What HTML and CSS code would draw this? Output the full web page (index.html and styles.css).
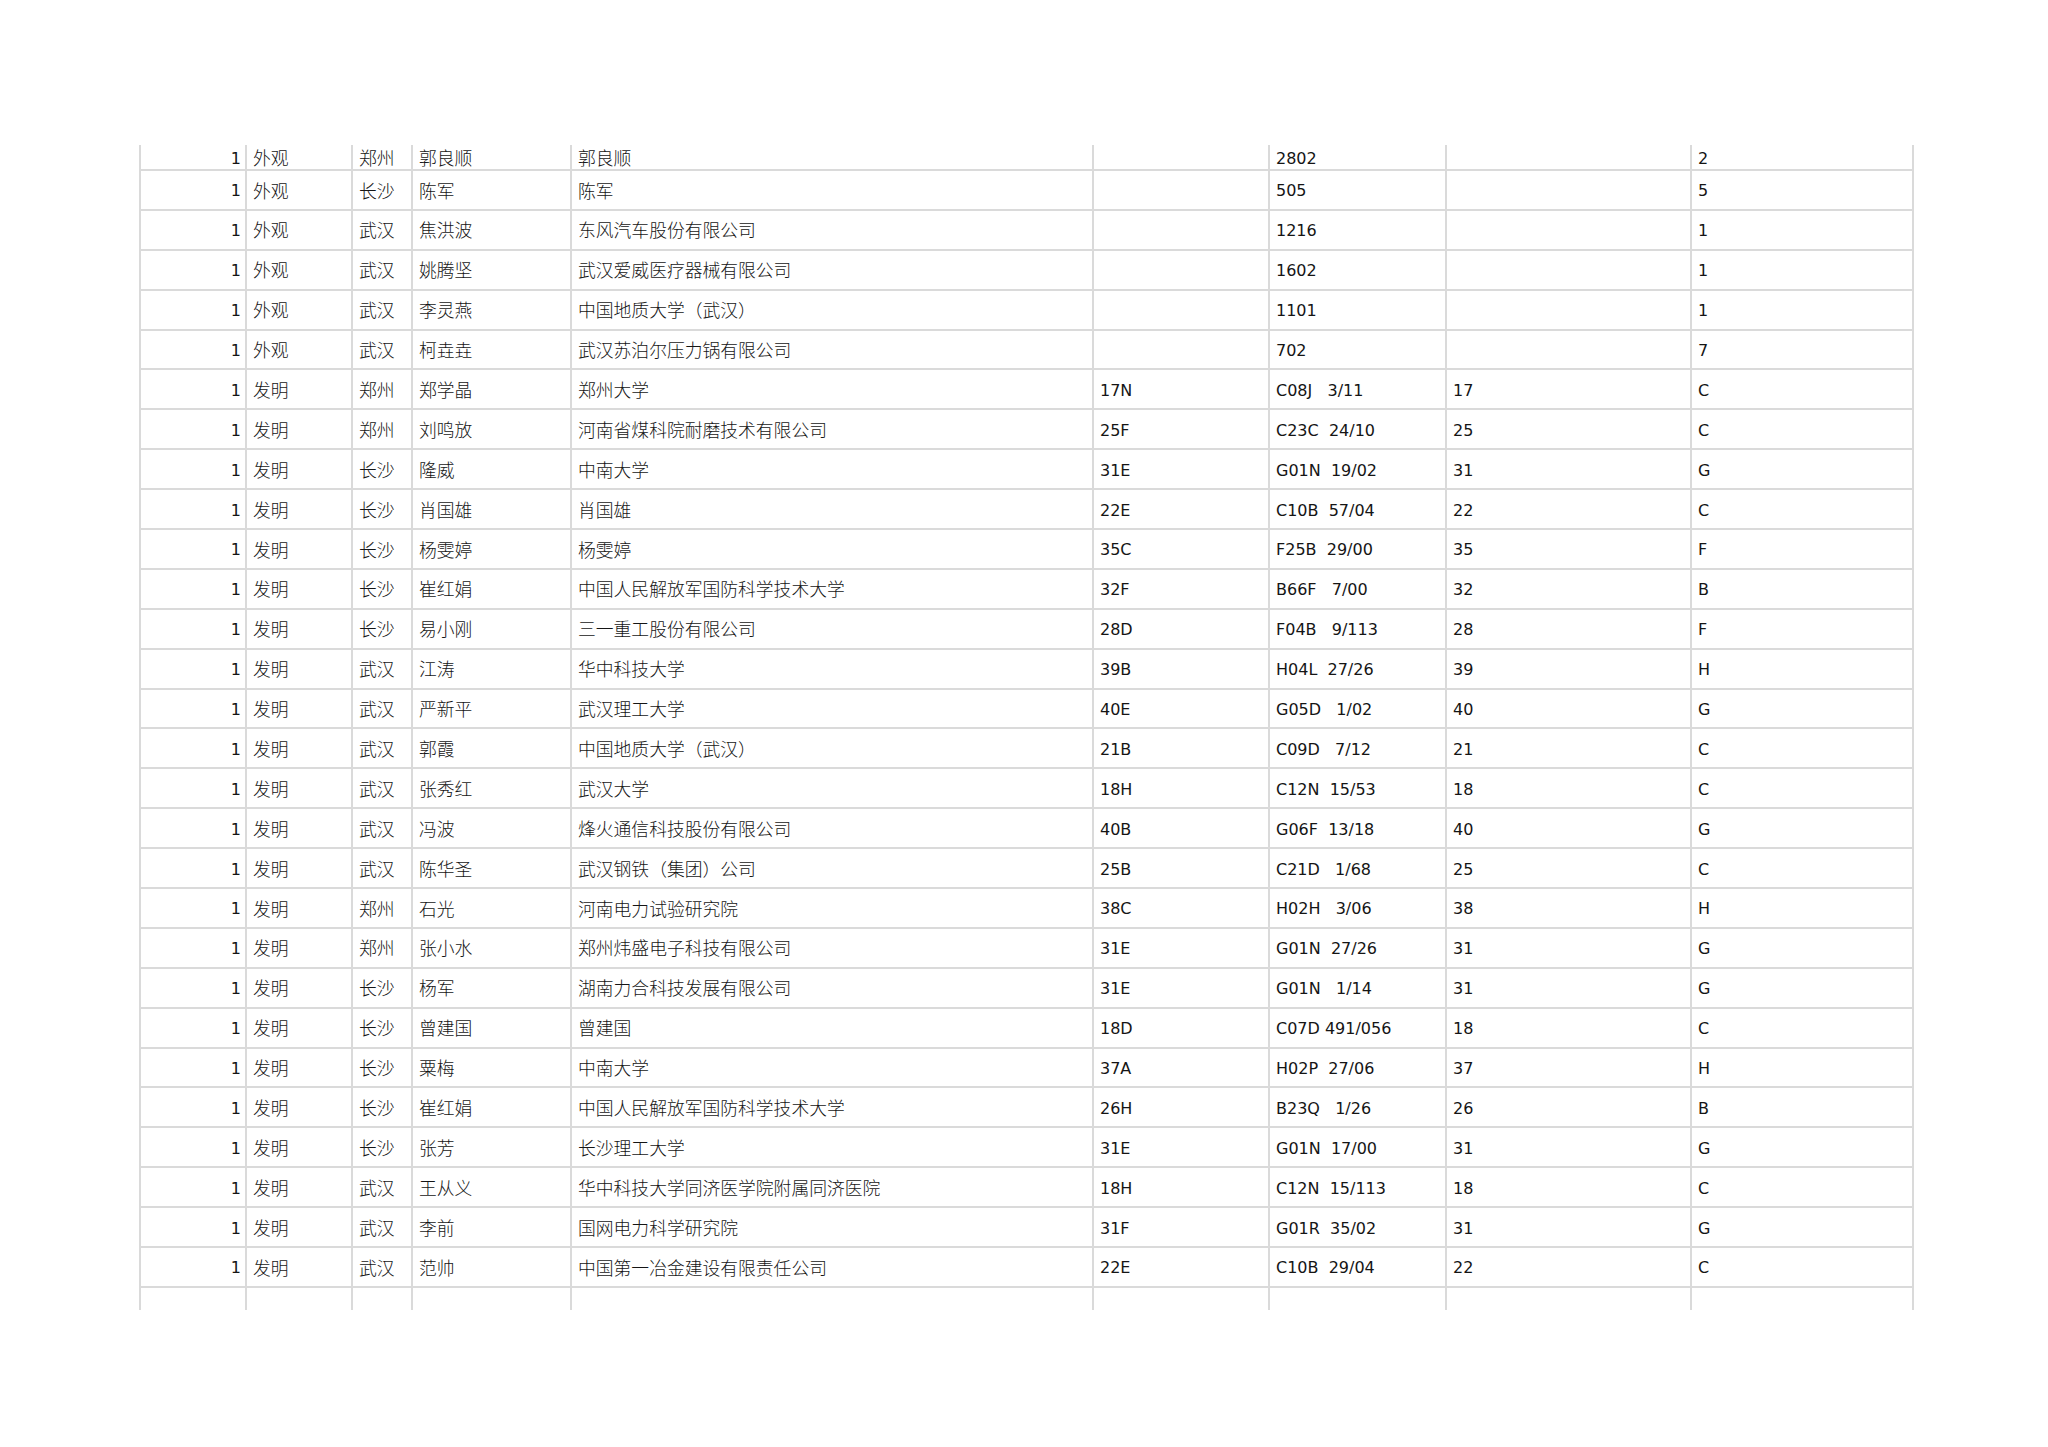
FILE: index.html
```html
<!DOCTYPE html>
<html lang="zh-CN">
<head>
<meta charset="utf-8">
<title>专利列表</title>
<link rel="stylesheet" href="styles.css">
</head>
<body>
<div class="sheet">
  <div class="row first"><div class="c n">1</div><div class="c">外观</div><div class="c">郑州</div><div class="c">郭良顺</div><div class="c">郭良顺</div><div class="c"></div><div class="c">2802</div><div class="c"></div><div class="c">2</div></div>
  <div class="row"><div class="c n">1</div><div class="c">外观</div><div class="c">长沙</div><div class="c">陈军</div><div class="c">陈军</div><div class="c"></div><div class="c">505</div><div class="c"></div><div class="c">5</div></div>
  <div class="row"><div class="c n">1</div><div class="c">外观</div><div class="c">武汉</div><div class="c">焦洪波</div><div class="c">东风汽车股份有限公司</div><div class="c"></div><div class="c">1216</div><div class="c"></div><div class="c">1</div></div>
  <div class="row"><div class="c n">1</div><div class="c">外观</div><div class="c">武汉</div><div class="c">姚腾坚</div><div class="c">武汉爱威医疗器械有限公司</div><div class="c"></div><div class="c">1602</div><div class="c"></div><div class="c">1</div></div>
  <div class="row"><div class="c n">1</div><div class="c">外观</div><div class="c">武汉</div><div class="c">李灵燕</div><div class="c">中国地质大学（武汉）</div><div class="c"></div><div class="c">1101</div><div class="c"></div><div class="c">1</div></div>
  <div class="row"><div class="c n">1</div><div class="c">外观</div><div class="c">武汉</div><div class="c">柯垚垚</div><div class="c">武汉苏泊尔压力锅有限公司</div><div class="c"></div><div class="c">702</div><div class="c"></div><div class="c">7</div></div>
  <div class="row"><div class="c n">1</div><div class="c">发明</div><div class="c">郑州</div><div class="c">郑学晶</div><div class="c">郑州大学</div><div class="c">17N</div><div class="c">C08J   3/11</div><div class="c">17</div><div class="c">C</div></div>
  <div class="row"><div class="c n">1</div><div class="c">发明</div><div class="c">郑州</div><div class="c">刘鸣放</div><div class="c">河南省煤科院耐磨技术有限公司</div><div class="c">25F</div><div class="c">C23C  24/10</div><div class="c">25</div><div class="c">C</div></div>
  <div class="row"><div class="c n">1</div><div class="c">发明</div><div class="c">长沙</div><div class="c">隆威</div><div class="c">中南大学</div><div class="c">31E</div><div class="c">G01N  19/02</div><div class="c">31</div><div class="c">G</div></div>
  <div class="row"><div class="c n">1</div><div class="c">发明</div><div class="c">长沙</div><div class="c">肖国雄</div><div class="c">肖国雄</div><div class="c">22E</div><div class="c">C10B  57/04</div><div class="c">22</div><div class="c">C</div></div>
  <div class="row"><div class="c n">1</div><div class="c">发明</div><div class="c">长沙</div><div class="c">杨雯婷</div><div class="c">杨雯婷</div><div class="c">35C</div><div class="c">F25B  29/00</div><div class="c">35</div><div class="c">F</div></div>
  <div class="row"><div class="c n">1</div><div class="c">发明</div><div class="c">长沙</div><div class="c">崔红娟</div><div class="c">中国人民解放军国防科学技术大学</div><div class="c">32F</div><div class="c">B66F   7/00</div><div class="c">32</div><div class="c">B</div></div>
  <div class="row"><div class="c n">1</div><div class="c">发明</div><div class="c">长沙</div><div class="c">易小刚</div><div class="c">三一重工股份有限公司</div><div class="c">28D</div><div class="c">F04B   9/113</div><div class="c">28</div><div class="c">F</div></div>
  <div class="row"><div class="c n">1</div><div class="c">发明</div><div class="c">武汉</div><div class="c">江涛</div><div class="c">华中科技大学</div><div class="c">39B</div><div class="c">H04L  27/26</div><div class="c">39</div><div class="c">H</div></div>
  <div class="row"><div class="c n">1</div><div class="c">发明</div><div class="c">武汉</div><div class="c">严新平</div><div class="c">武汉理工大学</div><div class="c">40E</div><div class="c">G05D   1/02</div><div class="c">40</div><div class="c">G</div></div>
  <div class="row"><div class="c n">1</div><div class="c">发明</div><div class="c">武汉</div><div class="c">郭霞</div><div class="c">中国地质大学（武汉）</div><div class="c">21B</div><div class="c">C09D   7/12</div><div class="c">21</div><div class="c">C</div></div>
  <div class="row"><div class="c n">1</div><div class="c">发明</div><div class="c">武汉</div><div class="c">张秀红</div><div class="c">武汉大学</div><div class="c">18H</div><div class="c">C12N  15/53</div><div class="c">18</div><div class="c">C</div></div>
  <div class="row"><div class="c n">1</div><div class="c">发明</div><div class="c">武汉</div><div class="c">冯波</div><div class="c">烽火通信科技股份有限公司</div><div class="c">40B</div><div class="c">G06F  13/18</div><div class="c">40</div><div class="c">G</div></div>
  <div class="row"><div class="c n">1</div><div class="c">发明</div><div class="c">武汉</div><div class="c">陈华圣</div><div class="c">武汉钢铁（集团）公司</div><div class="c">25B</div><div class="c">C21D   1/68</div><div class="c">25</div><div class="c">C</div></div>
  <div class="row"><div class="c n">1</div><div class="c">发明</div><div class="c">郑州</div><div class="c">石光</div><div class="c">河南电力试验研究院</div><div class="c">38C</div><div class="c">H02H   3/06</div><div class="c">38</div><div class="c">H</div></div>
  <div class="row"><div class="c n">1</div><div class="c">发明</div><div class="c">郑州</div><div class="c">张小水</div><div class="c">郑州炜盛电子科技有限公司</div><div class="c">31E</div><div class="c">G01N  27/26</div><div class="c">31</div><div class="c">G</div></div>
  <div class="row"><div class="c n">1</div><div class="c">发明</div><div class="c">长沙</div><div class="c">杨军</div><div class="c">湖南力合科技发展有限公司</div><div class="c">31E</div><div class="c">G01N   1/14</div><div class="c">31</div><div class="c">G</div></div>
  <div class="row"><div class="c n">1</div><div class="c">发明</div><div class="c">长沙</div><div class="c">曾建国</div><div class="c">曾建国</div><div class="c">18D</div><div class="c">C07D 491/056</div><div class="c">18</div><div class="c">C</div></div>
  <div class="row"><div class="c n">1</div><div class="c">发明</div><div class="c">长沙</div><div class="c">粟梅</div><div class="c">中南大学</div><div class="c">37A</div><div class="c">H02P  27/06</div><div class="c">37</div><div class="c">H</div></div>
  <div class="row"><div class="c n">1</div><div class="c">发明</div><div class="c">长沙</div><div class="c">崔红娟</div><div class="c">中国人民解放军国防科学技术大学</div><div class="c">26H</div><div class="c">B23Q   1/26</div><div class="c">26</div><div class="c">B</div></div>
  <div class="row"><div class="c n">1</div><div class="c">发明</div><div class="c">长沙</div><div class="c">张芳</div><div class="c">长沙理工大学</div><div class="c">31E</div><div class="c">G01N  17/00</div><div class="c">31</div><div class="c">G</div></div>
  <div class="row"><div class="c n">1</div><div class="c">发明</div><div class="c">武汉</div><div class="c">王从义</div><div class="c">华中科技大学同济医学院附属同济医院</div><div class="c">18H</div><div class="c">C12N  15/113</div><div class="c">18</div><div class="c">C</div></div>
  <div class="row"><div class="c n">1</div><div class="c">发明</div><div class="c">武汉</div><div class="c">李前</div><div class="c">国网电力科学研究院</div><div class="c">31F</div><div class="c">G01R  35/02</div><div class="c">31</div><div class="c">G</div></div>
  <div class="row"><div class="c n">1</div><div class="c">发明</div><div class="c">武汉</div><div class="c">范帅</div><div class="c">中国第一冶金建设有限责任公司</div><div class="c">22E</div><div class="c">C10B  29/04</div><div class="c">22</div><div class="c">C</div></div>
  <div class="row tail"><div class="c"></div><div class="c"></div><div class="c"></div><div class="c"></div><div class="c"></div><div class="c"></div><div class="c"></div><div class="c"></div><div class="c"></div></div>
</div>
</body>
</html>
```

FILE: styles.css
```css
html, body {
  margin: 0;
  padding: 0;
  background: #ffffff;
}

.sheet {
  margin: 145px 0 0 139px;
  width: 1775px;
  font-family: "DejaVu Sans", "Noto Sans CJK SC", sans-serif;
  font-size: 16px;
  color: #151515;
}

.row {
  display: grid;
  grid-template-columns: 106px 106px 60px 159px 522px 176px 177px 245px 222px;
  height: 39.9px;
  box-sizing: border-box;
  border-bottom: 2px solid #dadada;
  border-right: 2px solid #dadada;
}

.row.first {
  height: 26px;
}

.row.tail {
  height: 22px;
  border-bottom: none;
}

.c {
  border-left: 2px solid #dadada;
  padding: 3px 6px 0 6px;
  display: flex;
  align-items: center;
  white-space: pre;
  font-weight: 400;
  line-height: 1;
}

.c:nth-child(n+2):nth-child(-n+5) {
  font-family: "Noto Sans CJK SC", sans-serif;
  font-size: 17.8px;
  font-weight: 300;
  padding-top: 1px;
}

.c.n {
  justify-content: flex-end;
  padding-right: 4px;
}
```
